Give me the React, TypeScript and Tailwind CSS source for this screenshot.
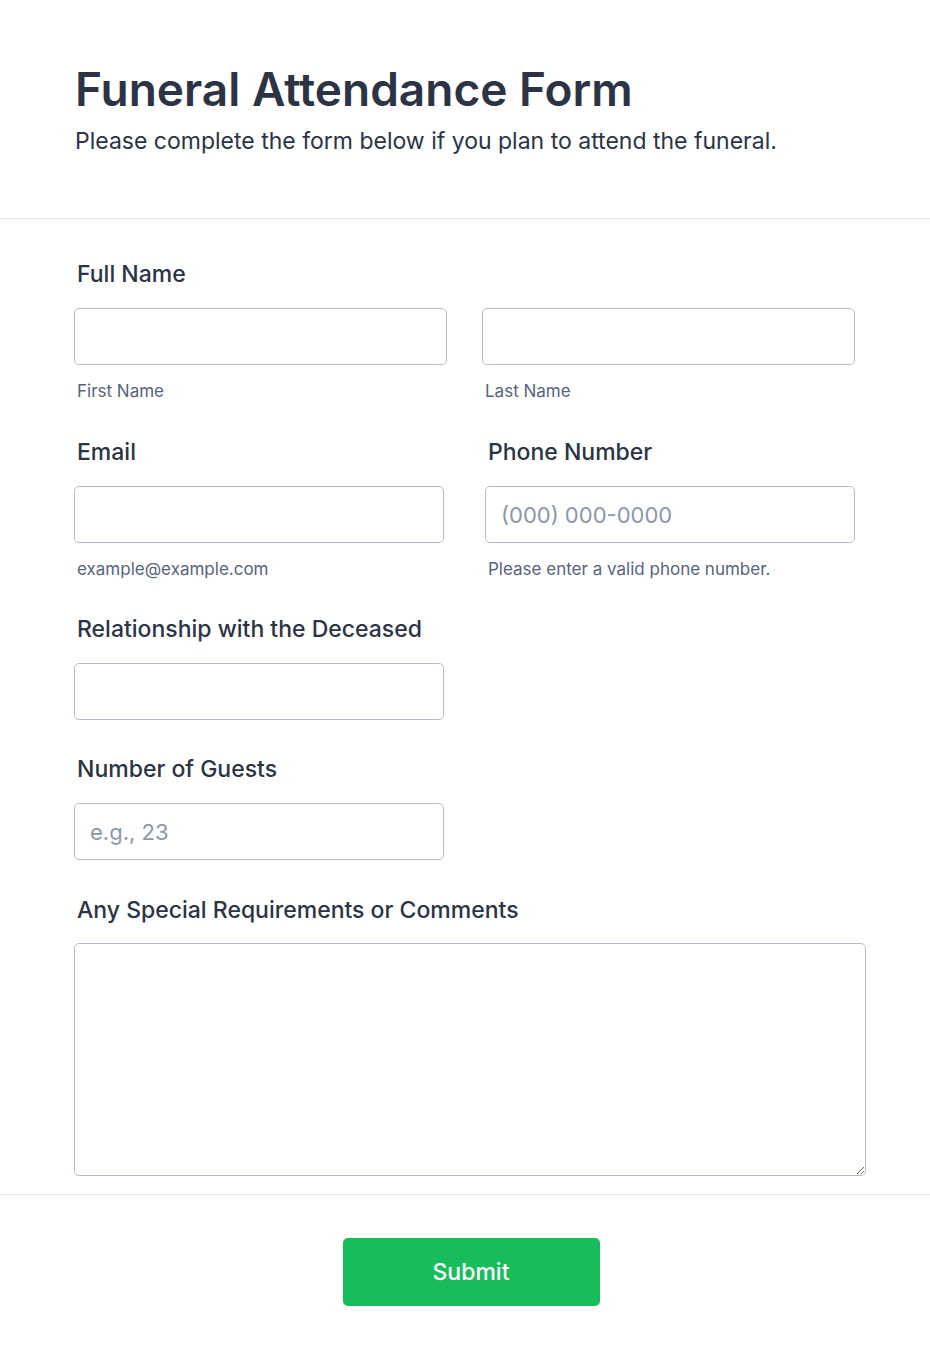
const labelCls = "block pl-[3px] text-[23px] leading-[30px] font-medium text-[#2c3345]";
const inputCls =
  "block w-full h-[57px] rounded-[5px] border border-[#b8bdc9] bg-white px-[15px] text-[22px] text-[#2c3345] placeholder:text-[#8d96aa] outline-none";
const subCls = "block pl-[3px] mt-[15px] text-[17px] leading-[22px] text-[#57647e]";

export default function App() {
  return (
    <div className="min-h-[1364px] bg-white font-['Inter',sans-serif] text-[#2c3345]">
      <header className="px-[75px] pt-[61px] pb-[62px] border-b border-[#e3e5ea]">
        <h1 className="text-[46px] leading-[56px] font-semibold">Funeral Attendance Form</h1>
        <p className="mt-[9px] text-[23px] leading-[30px]">
          Please complete the form below if you plan to attend the funeral.
        </p>
      </header>

      <form className="pl-[74px] pt-[40px]">
        {/* full name */}
        <div>
          <label className={labelCls}>Full Name</label>
          <div className="mt-[19px] flex gap-[35px]">
            <div className="w-[373px]">
              <input type="text" className={inputCls} />
              <span className={subCls}>First Name</span>
            </div>
            <div className="w-[373px]">
              <input type="text" className={inputCls} />
              <span className={subCls}>Last Name</span>
            </div>
          </div>
        </div>

        {/* email + phone */}
        <div className="mt-[35px] flex gap-[41px]">
          <div className="w-[370px]">
            <label className={labelCls}>Email</label>
            <input type="email" className={inputCls + " mt-[19px]"} />
            <span className={subCls}>example@example.com</span>
          </div>
          <div className="w-[370px]">
            <label className={labelCls}>Phone Number</label>
            <input type="tel" placeholder="(000) 000-0000" className={inputCls + " mt-[19px]"} />
            <span className={subCls}>Please enter a valid phone number.</span>
          </div>
        </div>

        <div className="mt-[34px] w-[370px]">
          <label className={labelCls}>Relationship with the Deceased</label>
          <input type="text" className={inputCls + " mt-[19px]"} />
        </div>

        <div className="mt-[34px] w-[370px]">
          <label className={labelCls}>Number of Guests</label>
          <input type="number" placeholder="e.g., 23" className={inputCls + " mt-[19px]"} />
        </div>

        <div className="mt-[35px] w-[792px]">
          <label className={labelCls}>Any Special Requirements or Comments</label>
          <textarea className="mt-[18px] block w-full h-[233px] rounded-[5px] border border-[#b8bdc9] bg-white px-[15px] py-[10px] text-[18px] outline-none" />
        </div>
      </form>

      <div className="mt-[18px] border-t border-[#e6e6f0] pt-[43px] pb-[58px] flex justify-center">
        <button
          type="button"
          className="ml-[12px] w-[257px] h-[68px] rounded-[5px] bg-[#18bd5b] text-white text-[23px] font-medium"
        >
          Submit
        </button>
      </div>
    </div>
  );
}
